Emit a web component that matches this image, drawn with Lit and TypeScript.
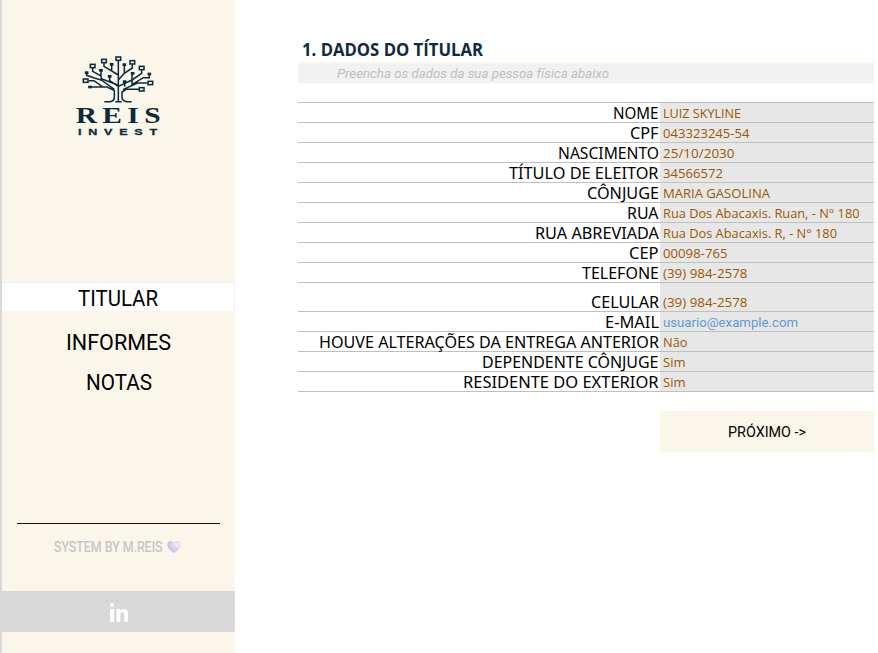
import { LitElement, html, svg, css } from "lit";
import { customElement, property } from "lit/decorators.js";

/** Text whose glyphs are condensed or widened so that it spans a given width. */
@customElement("fit-text")
export class FitText extends LitElement {
  @property() text = "";
  @property({ type: Number }) span = 0;

  static styles = css`
    :host { display: inline-block; white-space: pre; text-align: left; }
    .t { display: inline-block; transform-origin: 0 50%; }
  `;

  render() {
    return html`<span class="t">${this.text}</span>`;
  }

  updated() {
    const el = this.renderRoot.querySelector(".t") as HTMLElement;
    el.style.transform = "none";
    el.style.marginRight = "0";
    const w = el.getBoundingClientRect().width;
    el.style.transform = `scaleX(${this.span / w})`;
    el.style.marginRight = `${this.span - w}px`;
  }
}

interface Row {
  label: string;
  lw: number;
  value: string;
  vw: number;
  kind?: string;
}

const rows: Row[] = [
  { label: "NOME", lw: 45.5, value: "LUIZ SKYLINE", vw: 78 },
  { label: "CPF", lw: 28.5, value: "043323245-54", vw: 86.5 },
  { label: "NASCIMENTO", lw: 101, value: "25/10/2030", vw: 71.5 },
  { label: "TÍTULO DE ELEITOR", lw: 149.5, value: "34566572", vw: 60 },
  { label: "CÔNJUGE", lw: 72, value: "MARIA GASOLINA", vw: 107 },
  { label: "RUA", lw: 31.5, value: "Rua Dos Abacaxis. Ruan, - N° 180", vw: 196.5 },
  { label: "RUA ABREVIADA", lw: 124, value: "Rua Dos Abacaxis. R, - N° 180", vw: 174 },
  { label: "CEP", lw: 29.5, value: "00098-765", vw: 64.5 },
  { label: "TELEFONE", lw: 77, value: "(39) 984-2578", vw: 84.5 },
  { label: "CELULAR", lw: 68, value: "(39) 984-2578", vw: 84.5, kind: "tall" },
  { label: "E-MAIL", lw: 54, value: "usuario@example.com", vw: 135, kind: "mail" },
  { label: "HOUVE ALTERAÇÕES DA ENTREGA ANTERIOR", lw: 340, value: "Não", vw: 24.5 },
  { label: "DEPENDENTE CÔNJUGE", lw: 176.5, value: "Sim", vw: 22.5 },
  { label: "RESIDENTE DO EXTERIOR", lw: 195.5, value: "Sim", vw: 22.5 },
];

const openNodes = [
  [121, 20], [78, 27], [163, 31], [44, 42], [191, 48], [23, 86], [217, 93], [191, 112],
];
const solidNodes = [
  [101, 37], [139, 38], [69, 55], [26, 62], [164, 64], [214, 66], [95, 73], [140, 89], [36, 105],
];

const logo = html`<svg class="logo" width="92" height="86" viewBox="0 0 276 258">
  <g transform="translate(6 0)" fill="none" stroke="#0b2a3b" stroke-width="4.6">
    <path d="M121 26V148M78 33V43L121 69M101 39V55M163 37V48L139 64V40M139 64L121 84
      M44 48V58L69 72V57M69 72L70 80L121 100M26 64V70L47 77L70 84V87M95 75V86L121 103
      M32 86H48L72 103M36 105H88L109 116V137Q108 148 96 149H79
      M70 84L109 112M191 54V64L162 84V66M162 84L121 103M214 68V77H196L162 98M162 84V98
      M140 91V104M208 93H178L135 113M184 112H144L132 120V137Q134 148 146 149H161M121 149H112M121 149H131"/>
    ${openNodes.map(([x, y]) => svg`<rect x=${x - 7} y=${y - 5} width="14" height="10" fill="#fbf6ea"/>`)}
    ${solidNodes.map(([x, y]) => svg`<rect x=${x - 4} y=${y - 2.5} width="8" height="5" fill="#0b2a3b" stroke-width="3"/>`)}
  </g>
  <text transform="translate(-1 212) scale(1.3 1)" textLength="196" class="reis">REIS</text>
  <text transform="translate(6 249) scale(1.35 1)" textLength="176" class="invest">INVEST</text>
</svg>`;

const heart = html`<svg width="14" height="14" viewBox="0 0 15 14">
  <defs>
    <radialGradient id="h" cx=".72" cy=".3" r=".85">
      <stop offset="0" stop-color="#f6f0fa"/>
      <stop offset=".45" stop-color="#dfcff0"/>
      <stop offset="1" stop-color="#c9bccb"/>
    </radialGradient>
  </defs>
  <path d="M7.5 13.5C5 11.5 .3 8.5 .3 4.5C.3 2 2 .6 4 .6C5.8 .6 7 1.6 7.5 2.8C8 1.6 9.2 .6 11 .6C13 .6 14.7 2 14.7 4.5C14.7 8.5 10 11.5 7.5 13.5Z" fill="url(#h)"/>
</svg>`;

@customElement("app-root")
export class AppRoot extends LitElement {
  static styles = css`
    :host {
      display: flex;
      height: 653px;
      overflow: hidden;
      background: #fff;
      font-family: Roboto, sans-serif;
      color: #000;
    }
    .side {
      box-sizing: border-box;
      width: 235px;
      height: 653px;
      border-left: 2px solid #d9d9d9;
      background: #fbf6ea;
      display: flex;
      flex-direction: column;
    }
    .brand { height: 282px; box-sizing: border-box; padding: 52px 0 0 74px; }
    .logo { display: block; overflow: visible; }
    .reis { font: bold 68px "Liberation Serif", serif; fill: #0b2a3b; }
    .invest { font: bold 28px "Liberation Sans", sans-serif; fill: #0b2a3b; stroke: #0b2a3b; stroke-width: .8; }
    .nav { font-size: 22.5px; text-align: center; }
    .item { height: 40px; line-height: 40px; }
    .item.on {
      box-sizing: border-box;
      height: 29px;
      line-height: 30px;
      margin-bottom: 11px;
      background: #fff;
      border: solid #f0f0f2;
      border-width: 1px 1px 0 0;
    }
    .rule { width: 203px; height: 1px; margin: 121px 0 0 15px; background: #111; }
    .credit {
      display: flex;
      align-items: center;
      height: 46px;
      padding-left: 52px;
      gap: 4px;
      font-size: 14px;
      color: #c3c3c3;
      -webkit-text-stroke: .2px #c3c3c3;
    }
    .social {
      height: 41px;
      margin-top: 21px;
      padding-top: 2px;
      box-sizing: border-box;
      background: #d9d9d9;
      display: flex;
      align-items: center;
      justify-content: center;
    }
    .main { width: 576px; margin-left: 63px; padding-top: 37px; }
    h1 {
      margin: 0;
      height: 25px;
      padding-left: 4px;
      font: bold 18px/25px "Open Sans", sans-serif;
      color: #0f2a40;
    }
    .hint {
      height: 19px;
      line-height: 19px;
      border-top: 2px solid #fbf6ea;
      padding-left: 39px;
      background: #f1f1f1;
      color: #bfbfbf;
      font-size: 13.5px;
      font-style: italic;
    }
    .table { margin-top: 19px; border-top: 1px solid #bfbfbf; }
    .row { display: grid; grid-template-columns: 362px 214px; height: 20px; }
    .row > div {
      box-sizing: border-box;
      border-bottom: 1px solid #bfbfbf;
      display: flex;
      align-items: flex-end;
      line-height: 17px;
    }
    .row.tall { height: 29px; }
    .row .label {
      justify-content: flex-end;
      padding-right: 1.5px;
      font-family: "Noto Sans", sans-serif;
      font-size: 15.5px;
    }
    .row .value {
      padding-left: 3px;
      background: #e7e7e7;
      color: #9c5700;
      font-family: "Open Sans", sans-serif;
      font-size: 13px;
    }
    .row.mail .value { color: #5b9bd5; font-family: Roboto, sans-serif; }
    .next {
      display: flex;
      align-items: center;
      justify-content: center;
      width: 214px;
      height: 41px;
      margin: 19px 0 0 362px;
      background: #fbf6ea;
      font-size: 15px;
    }
  `;

  render() {
    return html`
      <div class="side">
        <div class="brand">${logo}</div>
        <div class="nav">
          <div class="item on"><fit-text text="TITULAR" .span=${80}></fit-text></div>
          <div class="item"><fit-text text="INFORMES" .span=${105}></fit-text></div>
          <div class="item"><fit-text text="NOTAS" .span=${66}></fit-text></div>
        </div>
        <div class="rule"></div>
        <div class="credit"><fit-text text="SYSTEM BY M.REIS" .span=${108.5}></fit-text>${heart}</div>
        <div class="social">
          <svg width="20" height="20" viewBox="0 0 20 20" fill="#fff">
            <rect x="1" y="0" width="4" height="4" rx="1.5"/>
            <rect x="1" y="6" width="4" height="13"/>
            <path d="M7.5 6H11V7.8C12 6.3 13.2 5.7 14.7 5.7C17.7 5.7 19 7.6 19 10.5V19H15.2V11.5C15.2 9.8 14.6 9 13.4 9C12 9 11.3 10 11.3 11.5V19H7.5Z"/>
          </svg>
        </div>
      </div>
      <div class="main">
        <h1><fit-text text="1. DADOS DO TÍTULAR" .span=${181}></fit-text></h1>
        <div class="hint"><fit-text text="Preencha os dados da sua pessoa física abaixo" .span=${272}></fit-text></div>
        <div class="table">
          ${rows.map(
            (r) => html`<div class="row ${r.kind ?? ""}">
              <div class="label"><fit-text .text=${r.label} .span=${r.lw}></fit-text></div>
              <div class="value"><fit-text .text=${r.value} .span=${r.vw}></fit-text></div>
            </div>`
          )}
        </div>
        <div class="next"><fit-text text="PRÓXIMO ->" .span=${78}></fit-text></div>
      </div>
    `;
  }
}
